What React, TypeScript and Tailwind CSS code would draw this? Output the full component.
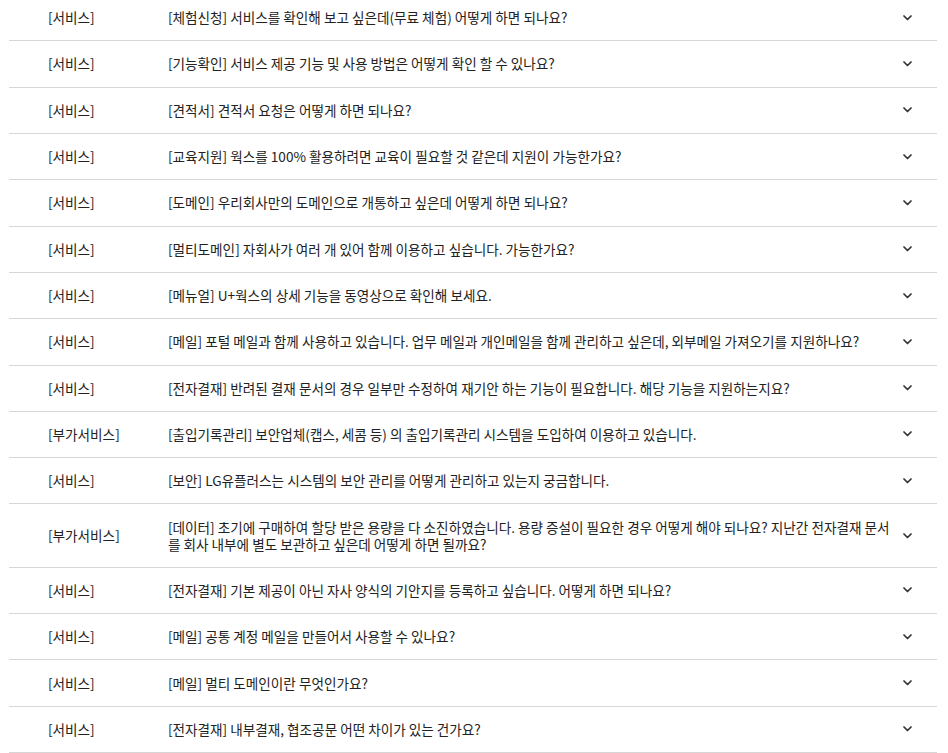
import React from "react";

const items: [string, string][] = [
  ["[서비스]", "[체험신청] 서비스를 확인해 보고 싶은데(무료 체험) 어떻게 하면 되나요?"],
  ["[서비스]", "[기능확인] 서비스 제공 기능 및 사용 방법은 어떻게 확인 할 수 있나요?"],
  ["[서비스]", "[견적서] 견적서 요청은 어떻게 하면 되나요?"],
  ["[서비스]", "[교육지원] 웍스를 100% 활용하려면 교육이 필요할 것 같은데 지원이 가능한가요?"],
  ["[서비스]", "[도메인] 우리회사만의 도메인으로 개통하고 싶은데 어떻게 하면 되나요?"],
  ["[서비스]", "[멀티도메인] 자회사가 여러 개 있어 함께 이용하고 싶습니다. 가능한가요?"],
  ["[서비스]", "[메뉴얼] U+웍스의 상세 기능을 동영상으로 확인해 보세요."],
  ["[서비스]", "[메일] 포털 메일과 함께 사용하고 있습니다. 업무 메일과 개인메일을 함께 관리하고 싶은데, 외부메일 가져오기를 지원하나요?"],
  ["[서비스]", "[전자결재] 반려된 결재 문서의 경우 일부만 수정하여 재기안 하는 기능이 필요합니다. 해당 기능을 지원하는지요?"],
  ["[부가서비스]", "[출입기록관리] 보안업체(캡스, 세콤 등) 의 출입기록관리 시스템을 도입하여 이용하고 있습니다."],
  ["[서비스]", "[보안] LG유플러스는 시스템의 보안 관리를 어떻게 관리하고 있는지 궁금합니다."],
  ["[부가서비스]", "[데이터] 초기에 구매하여 할당 받은 용량을 다 소진하였습니다. 용량 증설이 필요한 경우 어떻게 해야 되나요? 지난간 전자결재 문서를 회사 내부에 별도 보관하고 싶은데 어떻게 하면 될까요?"],
  ["[서비스]", "[전자결재] 기본 제공이 아닌 자사 양식의 기안지를 등록하고 싶습니다. 어떻게 하면 되나요?"],
  ["[서비스]", "[메일] 공통 계정 메일을 만들어서 사용할 수 있나요?"],
  ["[서비스]", "[메일] 멀티 도메인이란 무엇인가요?"],
  ["[서비스]", "[전자결재] 내부결재, 협조공문 어떤 차이가 있는 건가요?"],
];

function Chevron() {
  return (
    <svg width="9" height="6" viewBox="0 0 9 6" className="block">
      <polyline points="1,1 4.5,4.5 8,1" fill="none" stroke="#333" strokeWidth="1.7" strokeLinecap="round" strokeLinejoin="round" />
    </svg>
  );
}

export default function App() {
  return (
    <div
      className="bg-white w-[948px] h-[753px] overflow-hidden text-[13.6px] leading-[17px] text-[#222]"
      style={{ fontFamily: '"Noto Sans CJK KR", "Noto Sans", sans-serif' }}
    >
      <ul className="ml-[9px] w-[928px] -mt-[5px]">
        {items.map(([cat, q], i) => (
          <li key={i} className="flex items-center border-b border-[#d6d6d6] py-[14.16px]">
            <div className="w-[159px] pl-[39px] shrink-0">{cat}</div>
            <div className="w-[724px] shrink-0">{q}</div>
            <div className="ml-[11px] flex items-center">
              <Chevron />
            </div>
          </li>
        ))}
      </ul>
    </div>
  );
}
